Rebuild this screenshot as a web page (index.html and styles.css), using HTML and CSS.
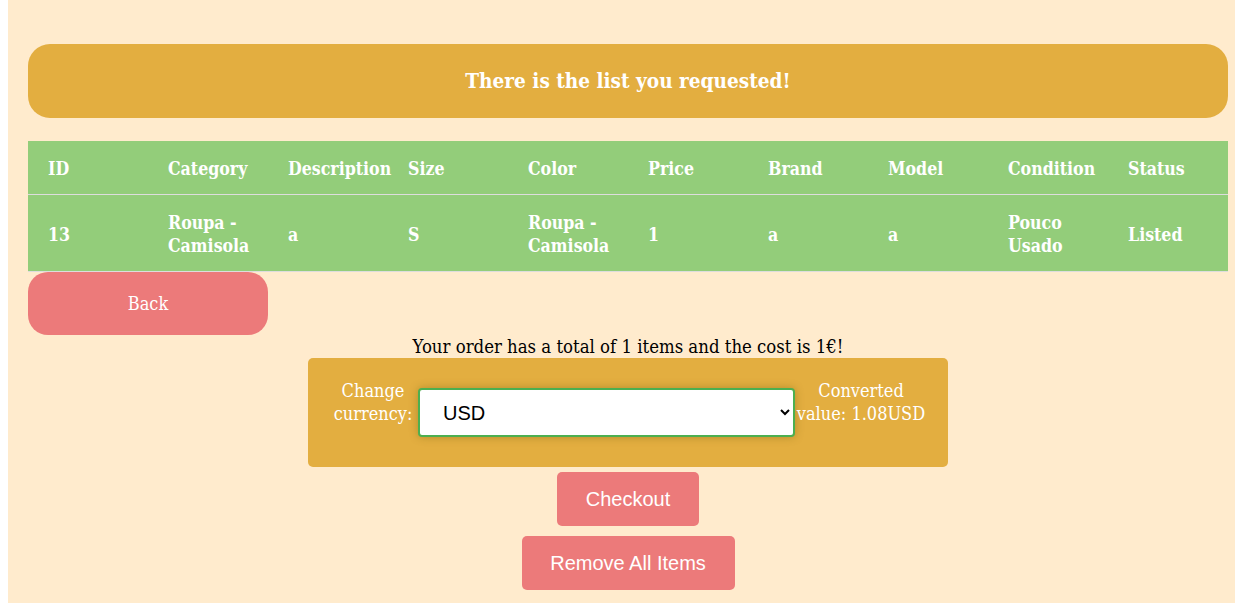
FILE: index.html
```html
<!DOCTYPE html>
<html>
<head>
<meta charset="utf-8">
<link rel="stylesheet" href="styles.css">
</head>
<body>
<div class="page">
  <div class="inner">
    <div class="banner">There is the list you requested!</div>
    <table class="items">
      <thead>
        <tr><th>ID</th><th>Category</th><th>Description</th><th>Size</th><th>Color</th><th>Price</th><th>Brand</th><th>Model</th><th>Condition</th><th>Status</th></tr>
      </thead>
      <tbody>
        <tr><td>13</td><td>Roupa - Camisola</td><td>a</td><td>S</td><td>Roupa - Camisola</td><td>1</td><td>a</td><td>a</td><td>Pouco Usado</td><td>Listed</td></tr>
      </tbody>
    </table>
    <button class="back">Back</button>
    <div class="order">
      <p class="summary">Your order has a total of 1 items and the cost is 1€!</p>
      <div class="currency">
        <label class="cur-label" for="cur">Change currency:</label>
        <select id="cur" class="cur-select"><option>USD</option><option>EUR</option><option>GBP</option></select>
        <div class="converted">Converted value: 1.08USD</div>
      </div>
      <button class="action checkout">Checkout</button>
      <button class="action remove">Remove All Items</button>
    </div>
  </div>
</div>
</body>
</html>
```
FILE: styles.css
```css
html, body { margin: 0; padding: 0; background: #fff; }
body { padding-left: 8px; }
.page {
  background: #ffebcd;
  min-height: 603px;
  font-family: "DejaVu Serif Condensed", "DejaVu Serif", serif;
  font-stretch: condensed;
}
.inner {
  width: 1200px;
  padding: 44px 0 0 20px;
}
.banner {
  background: #e3ae40;
  color: #fff;
  font-weight: bold;
  font-size: 20.6px;
  height: 74px;
  line-height: 74px;
  text-align: center;
  border-radius: 22px;
}
.items {
  margin-top: 23px;
  width: 1200px;
  border-collapse: collapse;
  table-layout: fixed;
  background: #93cd7a;
  color: #fff;
  font-size: 17.6px;
  line-height: 23px;
}
.items th, .items td {
  text-align: left;
  font-weight: bold;
  padding: 16px 20px 14px;
  width: 120px;
  box-sizing: border-box;
  vertical-align: middle;
}
.items td { padding-top: 16px; padding-bottom: 14px; }
.items thead tr { border-bottom: 1px solid #ddd; }
.items tbody tr { border-bottom: 1px solid #ddd; }
.back {
  display: block;
  margin-top: 0;
  width: 240px;
  height: 63px;
  border: none;
  border-radius: 20px;
  background: #ec7a7a;
  color: #fff;
  font-family: "DejaVu Serif Condensed", "DejaVu Serif", serif;
  font-stretch: condensed;
  font-size: 18px;
}
.order {
  display: flex;
  flex-direction: column;
  align-items: center;
}
.summary {
  margin: 0;
  font-size: 18.4px;
  line-height: 23px;
  color: #000;
}
.currency {
  width: 640px;
  height: 109px;
  box-sizing: border-box;
  background: #e3ae40;
  border-radius: 5px;
  display: flex;
  align-items: flex-start;
  justify-content: flex-start;
  padding: 21px 0 0 24px;
  color: #fff;
  font-size: 18px;
  line-height: 23px;
}
.cur-label { text-align: center; width: 82px; flex-shrink: 0; }
.cur-select {
  flex-shrink: 0;
  margin: 9px 0 0 4px;
  width: 377px;
  height: 49px;
  border: 2px solid #4caf50;
  border-radius: 4px;
  background: #fff;
  padding: 0 19px;
  font-family: "Liberation Sans", Arial, sans-serif;
  font-size: 20px;
  color: #000;
  box-shadow: 0 0 8px rgba(120, 100, 20, 0.45);
}
.converted { text-align: center; width: 132px; flex-shrink: 0; }
.action {
  border: none;
  border-radius: 5px;
  background: #ec7a7a;
  color: #fff;
  font-family: "Liberation Sans", Arial, sans-serif;
  font-size: 20px;
  height: 54px;
  padding: 0;
  white-space: nowrap;
}
.checkout { margin-top: 5px; width: 142px; }
.remove { margin-top: 10px; width: 213px; }
```
